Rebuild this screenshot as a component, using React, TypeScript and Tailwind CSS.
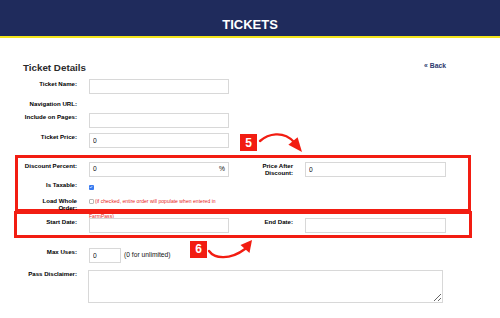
import React from "react";

const font = { fontFamily: '"Liberation Sans", Arial, sans-serif' };

function Checkbox({ checked }: { checked?: boolean }) {
  if (checked) {
    return (
      <span className="inline-flex h-[4.5px] w-[4.5px] items-center justify-center rounded-[1px] bg-[#3a7bf0] align-middle">
        <svg viewBox="0 0 10 10" className="h-[4px] w-[4px]">
          <path d="M2 5.2 L4.2 7.4 L8 2.8" fill="none" stroke="#fff" strokeWidth="1.8" />
        </svg>
      </span>
    );
  }
  return <span className="inline-block h-[4.5px] w-[4.5px] rounded-[1px] border-[0.6px] border-[#b8b8b8] bg-white align-middle" />;
}

export default function App() {
  const label = "text-right text-[6.1px] font-bold leading-[7px] text-black";
  const input = "h-[15px] border border-[#d8d8d8] bg-white px-[3px] text-[6.7px] text-[#111] outline-none";

  return (
    <div className="relative h-[318px] w-[500px] overflow-hidden bg-white" style={font}>
      {/* Header */}
      <div className="flex h-[36px] justify-center bg-[#1f2b5c] pt-[18px]">
        <h1 className="text-[13px] font-bold leading-[13px] text-white">TICKETS</h1>
      </div>
      <div className="h-[2px] bg-[#f4e51c]" />

      <div className="mt-[25px] flex items-start justify-between pl-[23px] pr-[54px]">
        <h2 className="text-[9.8px] font-bold leading-[10px] text-[#2b2b2b]">Ticket Details</h2>
        <a className="-mt-[1px] text-[6.8px] font-bold leading-[7px] text-[#2d3a6e]">« Back</a>
      </div>

      {/* Form */}
      <div className="mt-[6px] flex items-start">
        <div className={`w-[77px] pt-[0.5px] ${label}`}>Ticket Name:</div>
        <input className={`ml-[12px] w-[140px] ${input}`} readOnly />
      </div>
      <div className="mt-[6px] flex h-[7px] items-start">
        <div className={`w-[77px] ${label}`}>Navigation URL:</div>
      </div>
      <div className="mt-[6px] flex items-start">
        <div className={`w-[77px] ${label}`}>Include on Pages:</div>
        <input className={`ml-[12px] w-[140px] ${input}`} readOnly />
      </div>
      <div className="mt-[5px] flex items-start">
        <div className={`w-[77px] ${label}`}>Ticket Price:</div>
        <input className={`ml-[12px] w-[140px] ${input}`} defaultValue="0" readOnly />
      </div>

      {/* Box 1 */}
      <div className="ml-[15px] mt-[7px] w-[456px] border-[3px] border-[#f21d12] pt-[4px]">
        <div className="flex items-start">
          <div className={`w-[59px] ${label}`}>Discount Percent:</div>
          <div className={`ml-[12px] flex w-[140px] items-center justify-between ${input}`}>
            <span>0</span>
            <span>%</span>
          </div>
          <div className={`w-[64px] ${label}`}>
            Price After
            <br />
            Discount:
          </div>
          <input className={`ml-[12px] w-[141px] ${input}`} defaultValue="0" readOnly />
        </div>
        <div className="mt-[4px] flex h-[10px] items-start">
          <div className={`w-[59px] ${label}`}>Is Taxable:</div>
          <div className="ml-[12px] mt-[1.5px] leading-[7px]">
            <Checkbox checked />
          </div>
        </div>
        <div className="mt-[6px] flex h-[12px] items-start">
          <div className={`w-[59px] ${label}`}>
            Load Whole
            <br />
            Order:
          </div>
          <div className="ml-[12px] -mt-[3px] w-[140px] text-[5.1px] leading-[14.7px] text-[#e8231a]">
            <span className="mr-[1.5px]">
              <Checkbox />
            </span>
            (if checked, entire order will populate when entered in FarmPass)
          </div>
        </div>
      </div>

      {/* Box 2 */}
      <div className="-mt-[1px] ml-[14px] w-[458px] border-[3px] border-[#f21d12] pb-[2px] pt-[4px]">
        <div className="flex items-start">
          <div className={`w-[60px] ${label}`}>Start Date:</div>
          <input className={`ml-[12px] h-[14px] w-[140px] ${input}`} readOnly />
          <div className={`w-[64px] ${label}`}>End Date:</div>
          <input className={`ml-[12px] h-[14px] w-[141px] ${input}`} readOnly />
        </div>
      </div>

      <div className="mt-[10px] flex items-center">
        <div className={`w-[77px] self-start ${label}`}>Max Uses:</div>
        <input className={`ml-[12px] h-[14px] w-[32px] ${input}`} defaultValue="0" readOnly />
        <span className="ml-[3px] text-[6.7px] text-[#111]">(0 for unlimited)</span>
      </div>
      <div className="mt-[7px] flex items-start">
        <div className={`w-[77px] ${label}`}>Pass Disclaimer:</div>
        <textarea className="ml-[11px] h-[33px] w-[355px] border border-[#d8d8d8] bg-white outline-none" readOnly />
      </div>
      <div className="mt-[15px] flex items-start">
        <div className="w-[77px]" />
        <div className="ml-[11px] h-[15px] w-[355px] border border-[#d8d8d8]" />
      </div>

      {/* Annotations */}
      <div className="absolute left-[240px] top-[134px] flex h-[17px] w-[17px] items-center justify-center bg-[#f21d12] text-[12px] font-bold leading-none text-white">
        5
      </div>
      <div className="absolute left-[190px] top-[240.5px] flex h-[17px] w-[17px] items-center justify-center bg-[#f21d12] text-[12px] font-bold leading-none text-white">
        6
      </div>
      <svg className="pointer-events-none absolute left-0 top-0 h-[318px] w-[500px]" viewBox="0 0 500 318">
        <path d="M260 141 C268 134 283 130 294 142" fill="none" stroke="#f21d12" strokeWidth="2.4" strokeLinecap="round" />
        <path d="M288.4 144.8 L297.6 137.2 L302 152 Z" fill="#f21d12" />
        <path d="M209 251 C214 258 229 261 245 249" fill="none" stroke="#f21d12" strokeWidth="2.4" strokeLinecap="round" />
        <path d="M240.5 245 L249.5 253 L252 240 Z" fill="#f21d12" />
      </svg>
    </div>
  );
}
